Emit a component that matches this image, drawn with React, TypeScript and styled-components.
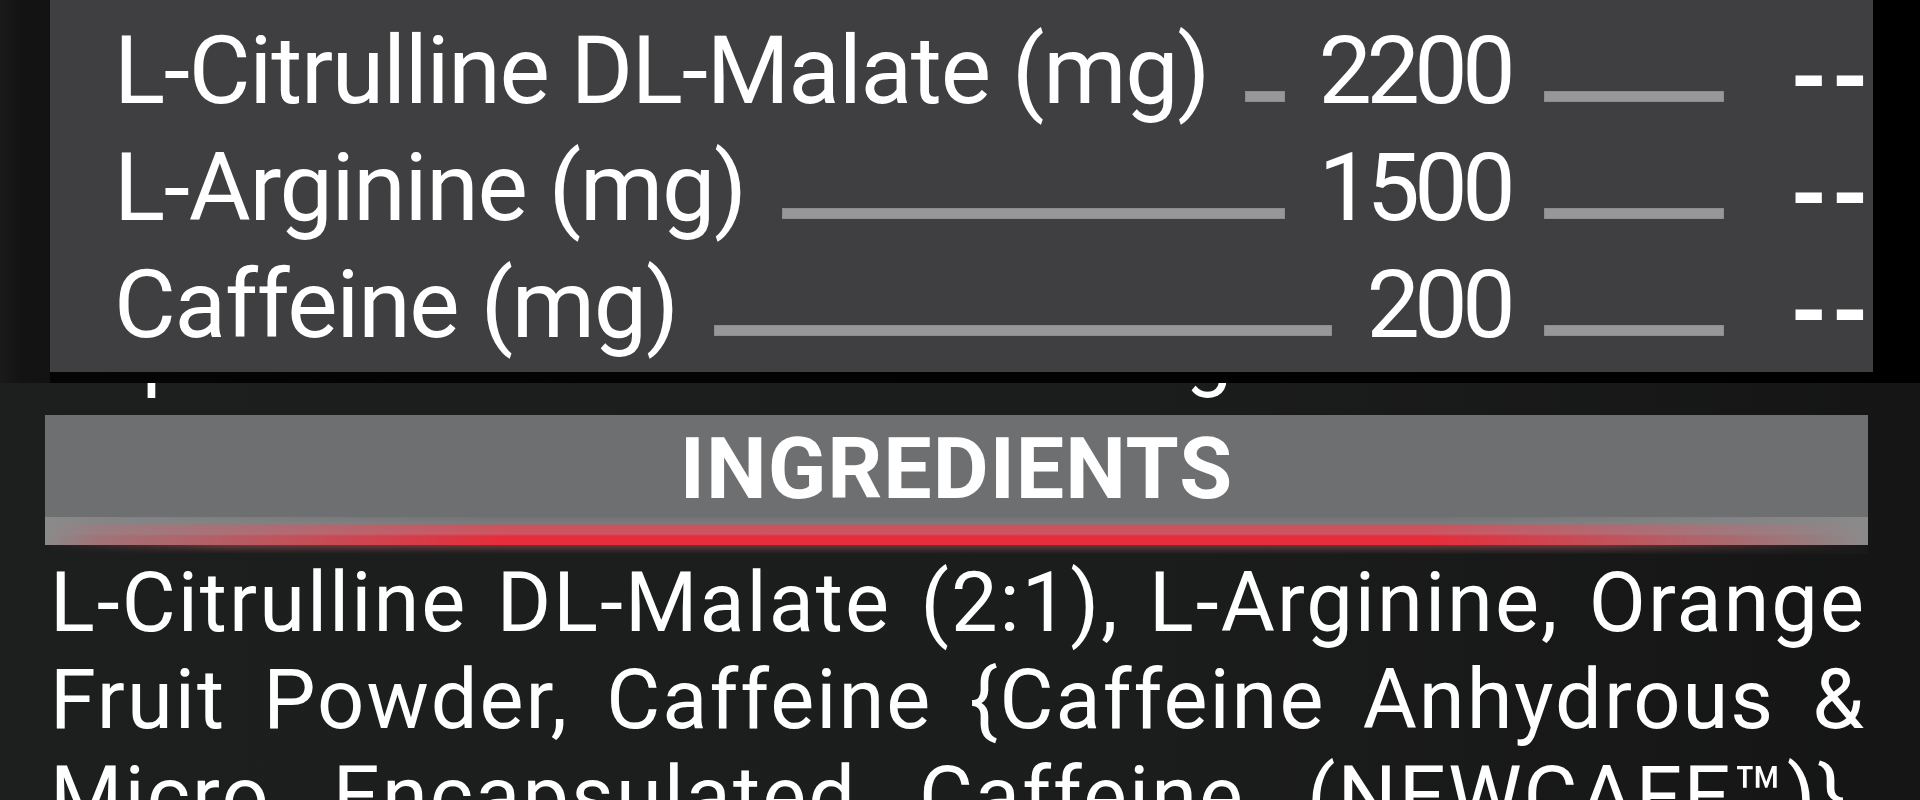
import React from "react";
import styled, { createGlobalStyle } from "styled-components";

const GlobalStyle = createGlobalStyle`
  html, body {
    margin: 0;
    padding: 0;
    background: #000;
  }
  body {
    font-family: Roboto, "Liberation Sans", sans-serif;
    color: #fff;
  }
`;

const Page = styled.div`
  width: 1920px;
  height: 800px;
  overflow: hidden;
  display: flex;
  flex-direction: column;
`;

const FactsSection = styled.section`
  height: 383px;
  box-sizing: border-box;
  padding-bottom: 11px;
  display: flex;
  flex-direction: column;
  justify-content: flex-end;
  background: linear-gradient(
    to right,
    #1a1a1a 0,
    #131313 20px,
    #121212 50px,
    #050505 50px,
    #000 100%
  );
`;

const FactsPanel = styled.div`
  margin-left: 50px;
  width: 1823px;
  box-sizing: border-box;
  padding: 12px 0 9px 64px;
  background: #3f3f41;
`;

const FactRow = styled.div`
  display: flex;
  align-items: flex-end;
  height: 117px;
  line-height: 117px;
  font-size: 95px;
  letter-spacing: -1.3px;
  white-space: nowrap;
`;

const Label = styled.span`
  flex: none;
`;

const Amount = styled.span`
  flex: none;
  text-align: right;
  letter-spacing: -5.5px;
`;

const Bar = styled.span`
  height: 11px;
  margin-bottom: 27px;
  background: #97979a;
  box-shadow: inset 0 0 0 1px #8c8c8e;
`;

const FillLeader = styled(Bar)`
  flex: 1;
  margin-left: 36px;
  margin-right: 34px;
`;

const ColumnLeader = styled(Bar)`
  flex: none;
  width: 180px;
  margin-left: 34px;
`;

const DailyValue = styled.span`
  flex: none;
  margin-left: 66px;
  padding-top: 14px;
  line-height: 103px;
  font-weight: 700;
  letter-spacing: 4px;
`;

const LowerSection = styled.section`
  flex: 1;
  display: flex;
  flex-direction: column;
  background: linear-gradient(to right, #1d1f1f 0%, #1b1c1c 60%, #151515 100%);
`;

const ClippedLine = styled.div`
  height: 16px;
  overflow: hidden;
  margin-left: 43px;
  width: 1191px;
`;

const ClippedText = styled.div`
  display: flex;
  justify-content: space-between;
  margin-top: -72px;
  font-size: 83px;
  line-height: 83px;
  letter-spacing: 2px;
  white-space: nowrap;
`;

const IngredientsHeader = styled.header`
  margin: 16px 0 0 45px;
  width: 1823px;
  display: flex;
  flex-direction: column;
`;

const HeaderTitle = styled.h2`
  margin: 0;
  height: 102px;
  box-sizing: border-box;
  padding-top: 6px;
  line-height: 96px;
  font-size: 86px;
  font-weight: 700;
  letter-spacing: 1px;
  text-align: center;
  background: #6e6f71;
`;

const GlowStripe = styled.div`
  height: 28px;
  background: linear-gradient(
      to right,
      #8a8a8b 0%,
      rgba(138, 138, 139, 0.75) 3%,
      rgba(138, 138, 139, 0) 25%,
      rgba(138, 138, 139, 0) 76%,
      rgba(138, 138, 139, 0.8) 96%,
      #8a8a8b 100%
    ),
    linear-gradient(
      to bottom,
      #717273 0,
      #7a7b7c 6px,
      #c9535f 9px,
      #cf5663 17px,
      #e52d3b 19px,
      #e52d3b 28px
    );
`;

const GlowShadow = styled.div`
  height: 9px;
  background: linear-gradient(
      to right,
      #1c1e1e 0%,
      rgba(28, 29, 29, 0) 10%,
      rgba(28, 29, 29, 0) 85%,
      #181919 100%
    ),
    linear-gradient(to bottom, #613b3f, #2e2425 70%, #1c1d1d);
`;

const IngredientsText = styled.div`
  margin-left: 50px;
  width: 1816px;
  font-size: 83px;
  line-height: 97px;
  letter-spacing: 2px;
`;

const TextLine = styled.div`
  text-align: justify;
  text-align-last: justify;
`;

const facts = [
  { label: "L-Citrulline DL-Malate (mg)", amount: "2200" },
  { label: "L-Arginine (mg)", amount: "1500" },
  { label: "Caffeine (mg)", amount: "200" },
];

const ingredientLines = [
  "L-Citrulline DL-Malate (2:1), L-Arginine, Orange",
  "Fruit Powder, Caffeine {Caffeine Anhydrous &",
  "Micro Encapsulated Caffeine (NEWCAFE\u2122)},",
];

const App: React.FC = () => {
  return (
    <Page>
      <GlobalStyle />
      <FactsSection>
        <FactsPanel>
          {facts.map((fact) => (
            <FactRow key={fact.label}>
              <Label>{fact.label}</Label>
              <FillLeader />
              <Amount>{fact.amount}</Amount>
              <ColumnLeader />
              <DailyValue>--</DailyValue>
            </FactRow>
          ))}
        </FactsPanel>
      </FactsSection>
      <LowerSection>
        <ClippedLine>
          <ClippedText>
            <span>Supreme Nutrition Matrix</span>
            <span>10 g</span>
          </ClippedText>
        </ClippedLine>
        <IngredientsHeader>
          <HeaderTitle>INGREDIENTS</HeaderTitle>
          <GlowStripe />
          <GlowShadow />
        </IngredientsHeader>
        <IngredientsText>
          {ingredientLines.map((line) => (
            <TextLine key={line}>{line}</TextLine>
          ))}
        </IngredientsText>
      </LowerSection>
    </Page>
  );
};

export default App;
